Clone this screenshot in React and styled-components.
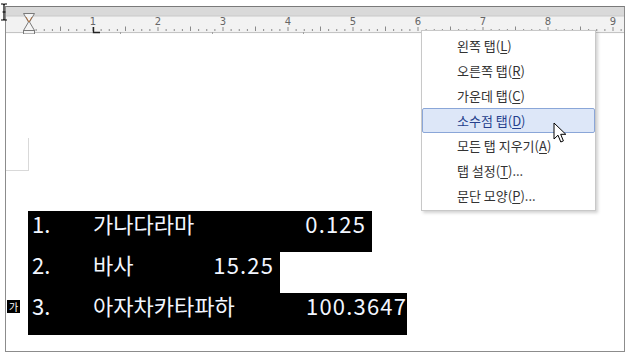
import React from "react";
import styled, { createGlobalStyle } from "styled-components";

const Global = createGlobalStyle`
  body {
    margin: 0;
    background: #ffffff;
    font-family: "Noto Sans CJK KR", "Noto Sans", sans-serif;
  }
`;

const Screen = styled.div`
  position: relative;
  width: 634px;
  height: 355px;
  overflow: hidden;
  padding-top: 6px;
  box-sizing: border-box;
`;

const Frame = styled.div`
  position: relative;
  margin-left: 5px;
  width: 618px;
  height: 344px;
  border: 1px solid #8c8c8c;
  border-top-color: #7a7a7a;
  display: flex;
  flex-direction: column;
`;

const RulerSvg = styled.svg`
  display: block;
  flex: none;
`;

const Page = styled.div`
  flex: 1;
  display: flex;
  flex-direction: column;
  align-items: flex-start;
`;

const Corner = styled.div`
  margin-top: 104px;
  width: 22px;
  height: 32px;
  border-right: 1px solid #d9d9d9;
  border-bottom: 1px solid #d9d9d9;
`;

const Block = styled.div`
  margin-top: 40px;
  margin-left: 22px;
  display: flex;
  flex-direction: column;
  align-items: flex-start;
`;

const Row = styled.div`
  position: relative;
  display: flex;
  align-items: flex-start;
  box-sizing: border-box;
  height: ${(p) => p.h}px;
  padding-top: 1px;
  padding-left: 4px;
  padding-right: ${(p) => p.tail}px;
  background: #000;
  color: #f2f6ff;
  font-size: 22px;
  line-height: 1;
`;

const Num = styled.span`
  width: 61px;
`;

const Cells = styled.span`
  width: ${(p) => p.span}px;
  display: flex;
  justify-content: space-between;
`;

const Amount = styled.span`
  letter-spacing: 1.2px;
  margin-right: -1.2px;
`;

const Badge = styled.span`
  position: absolute;
  left: -21px;
  top: 7px;
  width: 13px;
  height: 13px;
  background: #000;
  color: #fff;
  font-size: 10px;
  line-height: 13px;
  text-align: center;
`;

const Menu = styled.ul`
  position: absolute;
  left: 415px;
  top: 23px;
  width: 173px;
  margin: 0;
  padding: 2px 0;
  list-style: none;
  background: #fff;
  border: 1px solid #c8c8c8;
  box-shadow: 2px 2px 3px rgba(0, 0, 0, 0.18);
`;

const Item = styled.li`
  box-sizing: border-box;
  height: 25px;
  padding-left: 34px;
  display: flex;
  align-items: center;
  font-size: 13px;
  color: ${(p) => (p.active ? "#253f8c" : "#333")};
  background: ${(p) => (p.active ? "#dde7f8" : "transparent")};
  border: 1px solid ${(p) => (p.active ? "#8aa6d8" : "transparent")};
  border-radius: 2px;
  white-space: nowrap;

  u {
    text-decoration: underline;
    text-underline-offset: 2px;
  }
`;

const Pointer = styled.svg`
  position: absolute;
  left: 547px;
  top: 115px;
`;

const IBeam = styled.svg`
  position: absolute;
  left: 0;
  top: 3px;
`;

const rows = [
  { n: "1.", label: "가나다라마", amount: "0.125", span: 272, tail: 7, h: 41 },
  { n: "2.", label: "바사", amount: "15.25", span: 180, tail: 7, h: 41 },
  { n: "3.", label: "아자차카타파하", amount: "100.3647", span: 313, tail: 1, h: 42, badge: true },
];

const menu = [
  ["왼쪽 탭(", "L", ")"],
  ["오른쪽 탭(", "R", ")"],
  ["가운데 탭(", "C", ")"],
  ["소수점 탭(", "D", ")"],
  ["모든 탭 지우기(", "A", ")"],
  ["탭 설정(", "T", ")..."],
  ["문단 모양(", "P", ")..."],
];

function Ruler() {
  const unit = 65;
  const origin = 28;
  const ticks = [];
  for (let i = 1; i < 78; i++) {
    const x = origin + (i * unit) / 8;
    if (x > 622) break;
    if (i % 8 === 0) continue;
    const half = i % 4 === 0;
    ticks.push(
      <line key={i} x1={x} x2={x} y1={half ? 26.5 : 29} y2={31} stroke="#8a8a8a" strokeWidth="1" />
    );
  }
  const nums = [];
  for (let k = 1; k <= 9; k++) {
    const x = origin + k * unit;
    nums.push(
      <g key={k}>
        <text x={x} y={25} fontSize="10" fill="#666" textAnchor="middle" fontFamily="'DejaVu Sans', sans-serif">
          {k}
        </text>
        <line x1={x} x2={x} y1={27} y2={31} stroke="#8a8a8a" />
      </g>
    );
  }
  return (
    <RulerSvg width="618" height="27" viewBox="6 7 618 27">
      <rect x="6" y="7" width="618" height="9" fill="#d9d9d9" />
      <rect x="6" y="16" width="618" height="16" fill="#f2f2f2" />
      <line x1="6" x2="624" y1="32.5" y2="32.5" stroke="#c4c4c4" />
      <rect x="6" y="33" width="618" height="1" fill="#fafafa" />
      <line x1="6" x2="624" y1="16" y2="16" stroke="#c8c8c8" />
      {[120, 212, 303].map((x) => (
        <line key={x} x1={x + 0.5} x2={x + 0.5} y1={32} y2={34} stroke="#a0a0a0" />
      ))}
      {ticks}
      {nums}
      {/* tab marker */}
      <path d="M93.5 27 V32.5 H100" fill="none" stroke="#222" strokeWidth="1.4" />
      {/* indent hourglass */}
      <path d="M23.5 13.5 H34.5 L29.5 22 L34.5 30.5 H23.5 L28.5 22 Z" fill="#f4f4f4" stroke="#7a7a7a" />
      <rect x="23.5" y="30.5" width="11" height="3.5" fill="#f4f4f4" stroke="#7a7a7a" />
      <path d="M26 17 L29 22 L32 17" fill="none" stroke="#b0672f" strokeWidth="0.8" />
    </RulerSvg>
  );
}

export default function App() {
  return (
    <>
      <Global />
      <Screen>
        <Frame>
          <Ruler />
          <Page>
            <Corner />
            <Block>
              {rows.map((r) => (
                <Row key={r.n} h={r.h} tail={r.tail}>
                  {r.badge && <Badge>가</Badge>}
                  <Num>{r.n}</Num>
                  <Cells span={r.span}>
                    <span>{r.label}</span>
                    <Amount>{r.amount}</Amount>
                  </Cells>
                </Row>
              ))}
            </Block>
          </Page>
          <Menu>
            {menu.map(([a, k, b], i) => (
              <Item key={k} active={i === 3}>
                {a}
                <u>{k}</u>
                {b}
              </Item>
            ))}
          </Menu>
          <Pointer width="14" height="22" viewBox="0 0 14 22">
            <path
              d="M1 1 L1 17 L5 13.2 L7.8 20 L10.4 18.9 L7.7 12.3 L12.8 12.3 Z"
              fill="#fff"
              stroke="#000"
              strokeWidth="1"
              strokeLinejoin="round"
            />
          </Pointer>
        </Frame>
        <IBeam width="8" height="18" viewBox="0 0 8 18">
          <path
            d="M1 1 H3 Q4 1 4 2 Q4 1 5 1 H7 M4 2 V16 M1 17 H3 Q4 17 4 16 Q4 17 5 17 H7 M2.5 9 H5.5"
            fill="none"
            stroke="#000"
            strokeWidth="1.2"
          />
        </IBeam>
      </Screen>
    </>
  );
}
